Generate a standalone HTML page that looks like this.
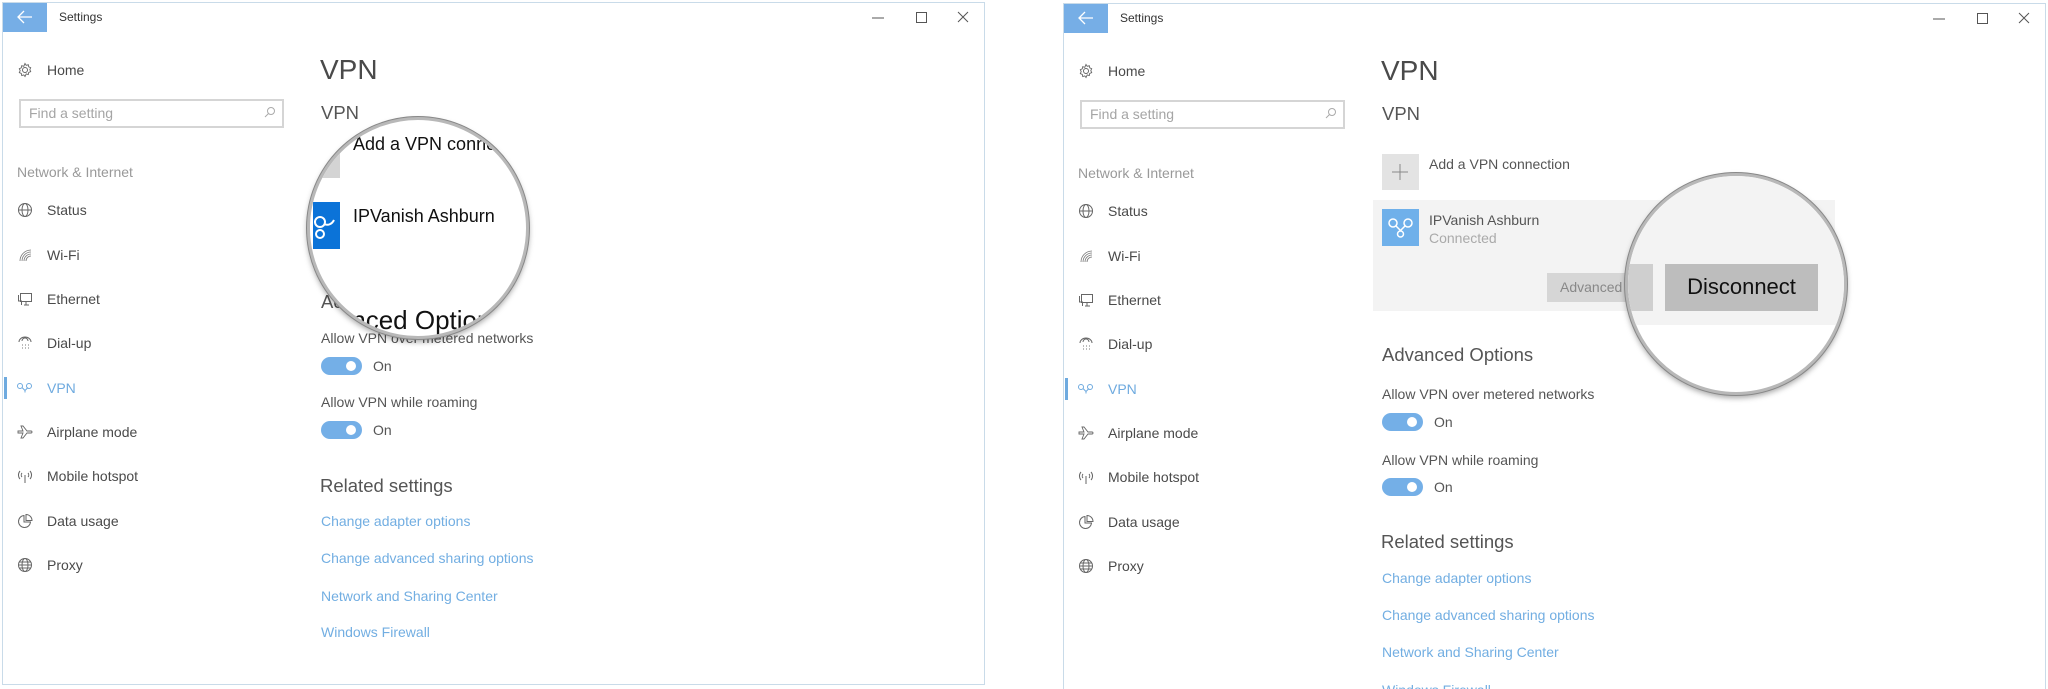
<!DOCTYPE html>
<html><head><meta charset="utf-8"><style>
*{margin:0;padding:0;box-sizing:border-box}
html{width:2048px;height:689px;overflow:hidden}
body{width:2048px;height:689px;background:#fff;position:relative;overflow:hidden;font-family:"Liberation Sans",sans-serif;color:#444}
.a{position:absolute;white-space:nowrap;line-height:1.2}
.win{position:absolute;border:1px solid #c9dbe9;background:#fff}
.back{position:absolute;width:44px;height:29px;background:#76aee6}
.s15{font-size:14px}.s12{font-size:12px;color:#333}
.nav{font-size:14px;color:#4a4a4a}
.h28{font-size:28px;color:#4a4a4a}
.h19{font-size:18.5px;color:#555}
.lnk{font-size:14px;color:#72aee2}
.tg{position:absolute;width:41px;height:18px;border-radius:9px;background:#74afe7}
.tg:after{content:"";position:absolute;right:6px;top:4px;width:10px;height:10px;border-radius:50%;background:#fff}
.srch{position:absolute;border:2px solid #d5d5d5;height:29px;width:265px}
.ic{position:absolute}
.mag{position:absolute;width:222px;height:222px;border-radius:50%;overflow:hidden;border:3px solid #b8b8b8;box-shadow:0 0 0 1px #888,0 3px 6px rgba(0,0,0,.35);background:#fff}
</style></head><body>

<div class="win" style="left:2px;top:2px;width:983px;height:683px"></div>
<div class="back" style="left:3px;top:3px"></div>
<svg class="ic" style="left:16px;top:10px" width="18" height="14" viewBox="0 0 18 14"><path d="M8 1L2 7l6 6M2 7h14" stroke="#fff" stroke-width="1.3" fill="none"/></svg>
<div class="a s12" style="left:59px;top:10px">Settings</div>
<svg class="ic" style="left:868px;top:9px" width="110" height="16"><path d="M4 9h12" stroke="#555"/><rect x="48.5" y="3.5" width="10" height="10" fill="none" stroke="#555"/><path d="M90 3l10 10M100 3L90 13" stroke="#555"/></svg>

<div class="win" style="left:1063px;top:3px;width:983px;height:690px"></div>
<div class="back" style="left:1064px;top:4px"></div>
<svg class="ic" style="left:1077px;top:11px" width="18" height="14" viewBox="0 0 18 14"><path d="M8 1L2 7l6 6M2 7h14" stroke="#fff" stroke-width="1.3" fill="none"/></svg>
<div class="a s12" style="left:1120px;top:11px">Settings</div>
<svg class="ic" style="left:1929px;top:10px" width="110" height="16"><path d="M4 9h12" stroke="#555"/><rect x="48.5" y="3.5" width="10" height="10" fill="none" stroke="#555"/><path d="M90 3l10 10M100 3L90 13" stroke="#555"/></svg>

<svg class="ic" style="left:17px;top:62px" width="16" height="16" viewBox="0 0 16 16"><circle cx="8" cy="8" r="2.5" fill="none" stroke="#666"/><path d="M8 1.5l1.2 1.8 2.1-.6.4 2.1 2 .9-.9 1.9.9 2-2 .8-.4 2.1-2.1-.6L8 14.5l-1.2-1.6-2.1.6-.4-2.1-2-.8.9-2-.9-1.9 2-.9.4-2.1 2.1.6z" fill="none" stroke="#666" stroke-width=".9"/></svg>
<div class="a nav" style="left:47px;top:62px">Home</div>
<div class="srch" style="left:19px;top:99px"></div>
<div class="a s15" style="left:29px;top:105px;color:#a5a5a5">Find a setting</div>
<svg class="ic" style="left:264px;top:106px" width="12" height="12"><circle cx="7" cy="5" r="3.5" fill="none" stroke="#aaa"/><path d="M4.5 7.5L1 11" stroke="#aaa"/></svg>
<div class="a s15" style="left:17px;top:164px;color:#999">Network &amp; Internet</div>

<div class="a nav" style="left:47px;top:202px">Status</div>
<div class="a nav" style="left:47px;top:247px">Wi-Fi</div>
<div class="a nav" style="left:47px;top:291px">Ethernet</div>
<div class="a nav" style="left:47px;top:335px">Dial-up</div>
<div class="a nav" style="left:47px;top:380px;color:#6eaadf">VPN</div>
<div class="a nav" style="left:47px;top:424px">Airplane mode</div>
<div class="a nav" style="left:47px;top:468px">Mobile hotspot</div>
<div class="a nav" style="left:47px;top:513px">Data usage</div>
<div class="a nav" style="left:47px;top:557px">Proxy</div>
<div style="position:absolute;left:4px;top:377px;width:3px;height:22px;background:#6eaadf"></div>

<svg class="ic" style="left:17px;top:202px" width="16" height="16"><circle cx="8" cy="8" r="6.5" fill="none" stroke="#666"/><ellipse cx="8" cy="8" rx="3" ry="6.5" fill="none" stroke="#666"/><path d="M1.5 8h13" stroke="#666"/></svg>
<svg class="ic" style="left:17px;top:247px" width="16" height="16"><path d="M3 14A11 11 0 0 1 14 3M5 14A9 9 0 0 1 14 5M7 14a7 7 0 0 1 7-7M9 14a5 5 0 0 1 5-5" stroke="#777" fill="none" stroke-width=".8"/></svg>
<svg class="ic" style="left:17px;top:291px" width="16" height="16"><rect x="3.5" y="2.5" width="11" height="8" fill="none" stroke="#666"/><path d="M1.5 4v6h3v4M7 14h5M9 10.5v3" stroke="#666" fill="none"/></svg>
<svg class="ic" style="left:17px;top:335px" width="16" height="16"><path d="M2 7a6 5 0 0 1 12 0M5 6a3 3 0 0 1 6 0" stroke="#666" fill="none"/><path d="M5 10h1M8 10h1M11 10h1M5 13h1M8 13h1M11 13h1" stroke="#777"/></svg>
<svg class="ic" style="left:16px;top:381px" width="18" height="14"><circle cx="4" cy="5" r="2.5" fill="none" stroke="#6eaadf"/><circle cx="13" cy="5" r="2.5" fill="none" stroke="#6eaadf"/><path d="M6 6.5l3 3 3-3M9 9.5v2" stroke="#6eaadf" fill="none"/></svg>
<svg class="ic" style="left:17px;top:424px" width="16" height="16"><path d="M1 7h5l-2-5h2l4 5h4a1 1 0 0 1 0 2h-4l-4 5H4l2-5H1z" fill="none" stroke="#666" stroke-width=".9"/></svg>
<svg class="ic" style="left:15px;top:468px" width="20" height="16"><path d="M10 7v8M5 3a6 6 0 0 0 0 8M15 3a6 6 0 0 1 0 8M7 5a3 3 0 0 0 0 4M13 5a3 3 0 0 1 0 4" stroke="#666" fill="none"/></svg>
<svg class="ic" style="left:17px;top:513px" width="16" height="16"><path d="M7 2.5A6 6 0 1 0 13.5 9H7z" fill="none" stroke="#666"/><path d="M9 1.5v6h6A6 6 0 0 0 9 1.5z" fill="none" stroke="#666"/></svg>
<svg class="ic" style="left:17px;top:557px" width="16" height="16"><circle cx="8" cy="8" r="6.5" fill="none" stroke="#666"/><ellipse cx="8" cy="8" rx="3" ry="6.5" fill="none" stroke="#666"/><path d="M1.5 8h13M2.5 5h11M2.5 11h11" stroke="#666"/></svg>

<svg class="ic" style="left:1078px;top:63px" width="16" height="16" viewBox="0 0 16 16"><circle cx="8" cy="8" r="2.5" fill="none" stroke="#666"/><path d="M8 1.5l1.2 1.8 2.1-.6.4 2.1 2 .9-.9 1.9.9 2-2 .8-.4 2.1-2.1-.6L8 14.5l-1.2-1.6-2.1.6-.4-2.1-2-.8.9-2-.9-1.9 2-.9.4-2.1 2.1.6z" fill="none" stroke="#666" stroke-width=".9"/></svg>
<div class="a nav" style="left:1108px;top:63px">Home</div>
<div class="srch" style="left:1080px;top:100px"></div>
<div class="a s15" style="left:1090px;top:106px;color:#a5a5a5">Find a setting</div>
<svg class="ic" style="left:1325px;top:107px" width="12" height="12"><circle cx="7" cy="5" r="3.5" fill="none" stroke="#aaa"/><path d="M4.5 7.5L1 11" stroke="#aaa"/></svg>
<div class="a s15" style="left:1078px;top:165px;color:#999">Network &amp; Internet</div>
<div class="a nav" style="left:1108px;top:203px">Status</div>
<div class="a nav" style="left:1108px;top:248px">Wi-Fi</div>
<div class="a nav" style="left:1108px;top:292px">Ethernet</div>
<div class="a nav" style="left:1108px;top:336px">Dial-up</div>
<div class="a nav" style="left:1108px;top:381px;color:#6eaadf">VPN</div>
<div class="a nav" style="left:1108px;top:425px">Airplane mode</div>
<div class="a nav" style="left:1108px;top:469px">Mobile hotspot</div>
<div class="a nav" style="left:1108px;top:514px">Data usage</div>
<div class="a nav" style="left:1108px;top:558px">Proxy</div>
<div style="position:absolute;left:1065px;top:378px;width:3px;height:22px;background:#6eaadf"></div>
<svg class="ic" style="left:1078px;top:203px" width="16" height="16"><circle cx="8" cy="8" r="6.5" fill="none" stroke="#666"/><ellipse cx="8" cy="8" rx="3" ry="6.5" fill="none" stroke="#666"/><path d="M1.5 8h13" stroke="#666"/></svg>
<svg class="ic" style="left:1078px;top:248px" width="16" height="16"><path d="M3 14A11 11 0 0 1 14 3M5 14A9 9 0 0 1 14 5M7 14a7 7 0 0 1 7-7M9 14a5 5 0 0 1 5-5" stroke="#777" fill="none" stroke-width=".8"/></svg>
<svg class="ic" style="left:1078px;top:292px" width="16" height="16"><rect x="3.5" y="2.5" width="11" height="8" fill="none" stroke="#666"/><path d="M1.5 4v6h3v4M7 14h5M9 10.5v3" stroke="#666" fill="none"/></svg>
<svg class="ic" style="left:1078px;top:336px" width="16" height="16"><path d="M2 7a6 5 0 0 1 12 0M5 6a3 3 0 0 1 6 0" stroke="#666" fill="none"/><path d="M5 10h1M8 10h1M11 10h1M5 13h1M8 13h1M11 13h1" stroke="#777"/></svg>
<svg class="ic" style="left:1077px;top:382px" width="18" height="14"><circle cx="4" cy="5" r="2.5" fill="none" stroke="#6eaadf"/><circle cx="13" cy="5" r="2.5" fill="none" stroke="#6eaadf"/><path d="M6 6.5l3 3 3-3M9 9.5v2" stroke="#6eaadf" fill="none"/></svg>
<svg class="ic" style="left:1078px;top:425px" width="16" height="16"><path d="M1 7h5l-2-5h2l4 5h4a1 1 0 0 1 0 2h-4l-4 5H4l2-5H1z" fill="none" stroke="#666" stroke-width=".9"/></svg>
<svg class="ic" style="left:1076px;top:469px" width="20" height="16"><path d="M10 7v8M5 3a6 6 0 0 0 0 8M15 3a6 6 0 0 1 0 8M7 5a3 3 0 0 0 0 4M13 5a3 3 0 0 1 0 4" stroke="#666" fill="none"/></svg>
<svg class="ic" style="left:1078px;top:514px" width="16" height="16"><path d="M7 2.5A6 6 0 1 0 13.5 9H7z" fill="none" stroke="#666"/><path d="M9 1.5v6h6A6 6 0 0 0 9 1.5z" fill="none" stroke="#666"/></svg>
<svg class="ic" style="left:1078px;top:558px" width="16" height="16"><circle cx="8" cy="8" r="6.5" fill="none" stroke="#666"/><ellipse cx="8" cy="8" rx="3" ry="6.5" fill="none" stroke="#666"/><path d="M1.5 8h13M2.5 5h11M2.5 11h11" stroke="#666"/></svg>

<div class="a h28" style="left:320px;top:53px">VPN</div>
<div class="a h19" style="left:321px;top:102px">VPN</div>
<div class="a h19" style="left:321px;top:291px">Advanced Options</div>
<div class="a s15" style="left:321px;top:330px;color:#555">Allow VPN over metered networks</div>
<div class="tg" style="left:321px;top:357px"></div>
<div class="a s15" style="left:373px;top:358px;color:#555">On</div>
<div class="a s15" style="left:321px;top:394px;color:#555">Allow VPN while roaming</div>
<div class="tg" style="left:321px;top:421px"></div>
<div class="a s15" style="left:373px;top:422px;color:#555">On</div>
<div class="a h19" style="left:320px;top:475px">Related settings</div>
<div class="a lnk" style="left:321px;top:513px">Change adapter options</div>
<div class="a lnk" style="left:321px;top:550px">Change advanced sharing options</div>
<div class="a lnk" style="left:321px;top:588px">Network and Sharing Center</div>
<div class="a lnk" style="left:321px;top:624px">Windows Firewall</div>

<div class="mag" style="left:307px;top:117px">
  <div style="position:absolute;left:12px;top:32px;width:18px;height:26px;background:#d4d4d4"></div>
  <div class="a" style="left:43px;top:14px;font-size:18px;color:#111">Add a VPN connection</div>
  <div style="position:absolute;left:3px;top:82px;width:27px;height:47px;background:#0b73d8"></div>
  <svg class="ic" style="left:0;top:92px" width="30" height="30"><circle cx="10" cy="10" r="5" fill="none" stroke="#fff" stroke-width="2"/><circle cx="10" cy="22" r="4" fill="none" stroke="#fff" stroke-width="2"/><path d="M14 12c4 2 8 0 10-4" stroke="#fff" stroke-width="2" fill="none"/></svg>
  <div class="a" style="left:43px;top:86px;font-size:18px;color:#111">IPVanish Ashburn</div>
  <div class="a" style="left:-18px;top:185px;font-size:26px;color:#111">Advanced Options</div>
</div>

<div class="a h28" style="left:1381px;top:54px">VPN</div>
<div class="a h19" style="left:1382px;top:103px">VPN</div>
<div style="position:absolute;left:1382px;top:154px;width:37px;height:36px;background:#e3e3e3"></div>
<svg class="ic" style="left:1390px;top:162px" width="20" height="20"><path d="M10 2v16M2 10h16" stroke="#888"/></svg>
<div class="a s15" style="left:1429px;top:156px;color:#555">Add a VPN connection</div>
<div style="position:absolute;left:1373px;top:200px;width:462px;height:111px;background:#f3f3f3"></div>
<div style="position:absolute;left:1382px;top:209px;width:37px;height:37px;background:#6fb0ea"></div>
<svg class="ic" style="left:1385px;top:215px" width="32" height="26"><circle cx="8" cy="8" r="4" fill="none" stroke="#fff" stroke-width="1.5"/><circle cx="23" cy="8" r="4" fill="none" stroke="#fff" stroke-width="1.5"/><path d="M11 11l4.5 4.5 4.5-4.5" stroke="#fff" stroke-width="1.5" fill="none"/><circle cx="15.5" cy="19" r="3" fill="none" stroke="#fff" stroke-width="1.5"/></svg>
<div class="a s15" style="left:1429px;top:212px;color:#555">IPVanish Ashburn</div>
<div class="a s15" style="left:1429px;top:230px;color:#aaa">Connected</div>
<div style="position:absolute;left:1547px;top:273px;width:80px;height:29px;background:#d6d6d6"></div>
<div class="a s15" style="left:1560px;top:279px;color:#888">Advanced</div>
<div class="a h19" style="left:1382px;top:344px">Advanced Options</div>
<div class="a s15" style="left:1382px;top:386px;color:#555">Allow VPN over metered networks</div>
<div class="tg" style="left:1382px;top:413px"></div>
<div class="a s15" style="left:1434px;top:414px;color:#555">On</div>
<div class="a s15" style="left:1382px;top:452px;color:#555">Allow VPN while roaming</div>
<div class="tg" style="left:1382px;top:478px"></div>
<div class="a s15" style="left:1434px;top:479px;color:#555">On</div>
<div class="a h19" style="left:1381px;top:531px">Related settings</div>
<div class="a lnk" style="left:1382px;top:570px">Change adapter options</div>
<div class="a lnk" style="left:1382px;top:607px">Change advanced sharing options</div>
<div class="a lnk" style="left:1382px;top:644px">Network and Sharing Center</div>
<div class="a lnk" style="left:1382px;top:682px">Windows Firewall</div>

<div class="mag" style="left:1625px;top:173px">
  <div style="position:absolute;left:0;top:0;width:222px;height:149px;background:#f3f3f3"></div>
  <div style="position:absolute;left:-10px;top:88px;width:35px;height:47px;background:#cfcfcf"></div>
  <div style="position:absolute;left:37px;top:88px;width:153px;height:47px;background:#bdbdbd"></div>
  <div class="a" style="left:37px;top:98px;width:153px;text-align:center;font-size:22px;color:#111">Disconnect</div>
</div>

</body></html>
